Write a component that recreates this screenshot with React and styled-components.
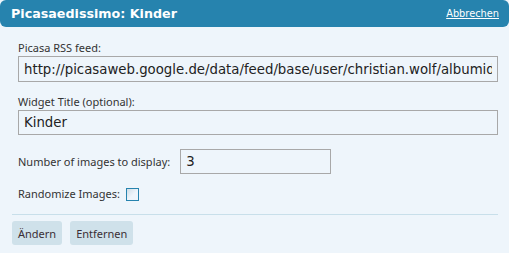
import React from "react";
import styled, { createGlobalStyle } from "styled-components";

const Global = createGlobalStyle`
  html, body {
    margin: 0;
    padding: 0;
    background: #eef5fb;
  }
  body {
    font-family: "DejaVu Sans", Verdana, sans-serif;
  }
`;

const Panel = styled.div`
  width: 509px;
  height: 253px;
  background: #eef5fb;
  box-sizing: border-box;
`;

const Header = styled.div`
  height: 27px;
  background: #2683ae;
  border-radius: 6px;
  display: flex;
  align-items: center;
  justify-content: space-between;
  padding: 0 10px 0 11px;
  color: #fff;
`;

const Title = styled.h3`
  margin: 0;
  font-size: 12.7px;
  font-weight: bold;
  color: #fff;
`;

const Cancel = styled.a`
  font-size: 9.8px;
  color: #fff;
  text-decoration: underline;
  cursor: pointer;
`;

const Body = styled.div`
  padding: 14px 11px 0 12px;
`;

const Field = styled.div`
  padding-left: 6px;
  margin-bottom: ${(p) => p.$gap || 0}px;
`;

const Label = styled.label`
  display: block;
  font-family: "Noto Sans", sans-serif;
  font-size: 11px;
  line-height: 14px;
  color: #333;
  margin-bottom: 1px;
`;

const Input = styled.input`
  display: block;
  box-sizing: border-box;
  width: ${(p) => p.$width || "100%"};
  height: ${(p) => p.$height || 26}px;
  margin: 0;
  border: 1px solid #a8a8a8;
  background: #eef5fb;
  font-family: "DejaVu Sans", Verdana, sans-serif;
  font-size: 13.3px;
  color: #222;
  padding: 0 5px;
  outline: none;
`;

const Row = styled.div`
  display: flex;
  align-items: center;
  gap: ${(p) => p.$space || 4}px;
  padding-left: 6px;
  margin-bottom: ${(p) => p.$gap || 0}px;

  ${Label} {
    margin: 0;
  }
`;

const Box = styled.span`
  display: inline-block;
  width: 11px;
  height: 11px;
  border: 1px solid #2683ae;
  background: linear-gradient(135deg, #d0dde6 0%, #eef5fb 55%);
`;

const Separator = styled.hr`
  border: 0;
  border-top: 1px solid #c8dfea;
  margin: 0 0 6px 0;
`;

const Actions = styled.div`
  display: flex;
  gap: 8px;
`;

const Button = styled.button`
  height: 24px;
  padding: 0 6px;
  border: 0;
  border-radius: 3px;
  background: #cfe1ea;
  font-family: "Noto Sans", sans-serif;
  font-size: 11px;
  color: #3b2f36;
`;

export default function App() {
  return (
    <>
      <Global />
      <Panel>
        <Header>
          <Title>Picasaedissimo: Kinder</Title>
          <Cancel>Abbrechen</Cancel>
        </Header>
        <Body>
          <Field $gap={13}>
            <Label>Picasa RSS feed:</Label>
            <Input
              readOnly
              value="http://picasaweb.google.de/data/feed/base/user/christian.wolf/albumid/5213812347652163377"
            />
          </Field>
          <Field $gap={14}>
            <Label>Widget Title (optional):</Label>
            <Input readOnly value="Kinder" $height={25} />
          </Field>
          <Row $gap={13} $space={10}>
            <Label>Number of images to display:</Label>
            <Input readOnly value="3" $width="151px" $height={25} />
          </Row>
          <Row $gap={13} $space={6}>
            <Label>Randomize Images:</Label>
            <Box />
          </Row>
          <Separator />
          <Actions>
            <Button>Ändern</Button>
            <Button>Entfernen</Button>
          </Actions>
        </Body>
      </Panel>
    </>
  );
}
